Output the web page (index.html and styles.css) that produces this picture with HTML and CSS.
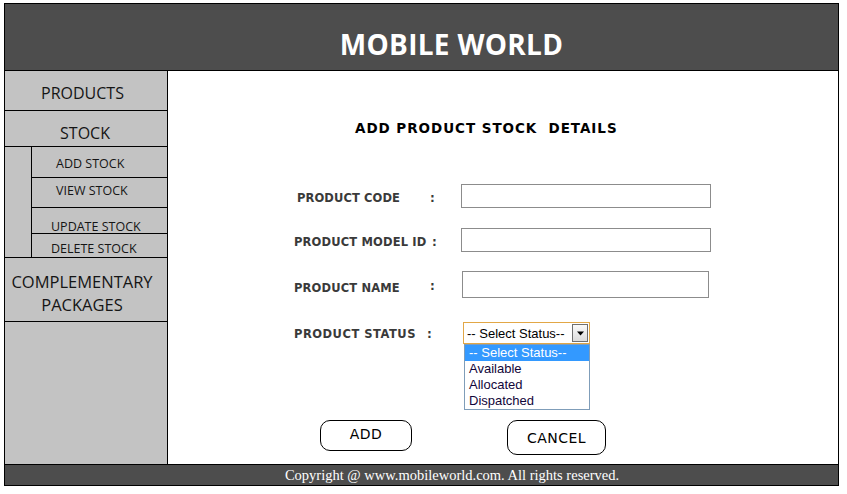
FILE: index.html
```html
<!DOCTYPE html>
<html>
<head>
<meta charset="utf-8">
<title>Mobile World</title>
<link rel="stylesheet" href="styles.css">
</head>
<body>
<div class="frame">
  <header class="header"><h1 class="brand">MOBILE WORLD</h1></header>
  <div class="body">
    <nav class="sidebar">
      <div class="nav-item nav-products">PRODUCTS</div>
      <div class="nav-item nav-stock">STOCK</div>
      <div class="subgroup">
        <div class="sub-spacer"></div>
        <div class="sub-list">
          <div class="sub-item sub-add">ADD STOCK</div>
          <div class="sub-item sub-view">VIEW STOCK</div>
          <div class="sub-item sub-update">UPDATE STOCK</div>
          <div class="sub-item sub-delete">DELETE STOCK</div>
        </div>
      </div>
      <div class="nav-item nav-comp">COMPLEMENTARY<br>PACKAGES</div>
    </nav>
    <main class="main">
      <h2 class="title">ADD PRODUCT STOCK&nbsp; DETAILS</h2>
      <div class="form">
        <label class="label label-code">PRODUCT CODE</label><span class="colon">:</span><div class="input"></div>
        <label class="label">PRODUCT MODEL ID</label><span class="colon colon-model">:</span><div class="input"></div>
        <label class="label label-name">PRODUCT NAME</label><span class="colon label-name">:</span><div class="input input-name"></div>
        <label class="label label-status">PRODUCT STATUS</label><span class="colon colon-status">:</span>
        <div class="select-wrap">
          <div class="select">
            <span class="select-text">-- Select Status--</span>
            <span class="select-btn"><svg width="9" height="5" viewBox="0 0 9 5"><path d="M1 0.5 L8 0.5 L4.5 4.5 Z" fill="#000"/></svg></span>
          </div>
          <ul class="dropdown">
            <li class="opt opt-active">-- Select Status--</li>
            <li class="opt">Available</li>
            <li class="opt">Allocated</li>
            <li class="opt">Dispatched</li>
          </ul>
        </div>
      </div>
      <div class="buttons">
        <button class="btn btn-add">ADD</button>
        <button class="btn btn-cancel">CANCEL</button>
      </div>
    </main>
  </div>
  <footer class="footer">Copyright @ www.mobileworld.com. All rights reserved.</footer>
</div>
</body>
</html>
```
FILE: styles.css
```css
* { box-sizing: border-box; }
html, body { margin: 0; padding: 0; background: #fff; }
.frame {
  margin: 3px 0 0 4px;
  width: 835px;
  border: 1px solid #000;
  display: flex;
  flex-direction: column;
}
.header {
  height: 67px;
  background: #4d4d4d;
  border-bottom: 1px solid #000;
  display: flex;
  align-items: center;
  justify-content: center;
  padding-left: 60px;
}
.brand {
  margin: 0;
  padding-top: 13px;
  color: #fff;
  font-family: "Open Sans", sans-serif;
  font-weight: 700;
  font-size: 28px;
  letter-spacing: 0.3px;
}
.body {
  display: flex;
  height: 393px;
}
.sidebar {
  width: 163px;
  background: #c3c3c3;
  border-right: 1px solid #000;
  font-family: "Open Sans", sans-serif;
  color: #151515;
  display: flex;
  flex-direction: column;
}
.nav-item {
  border-bottom: 1px solid #000;
  text-align: center;
  font-size: 16px;
  line-height: 20px;
}
.nav-products { height: 40px; padding-top: 12px; padding-right: 7px; }
.nav-stock { height: 36px; padding-top: 12px; padding-right: 2px; }
.subgroup {
  display: flex;
  height: 111px;
  border-bottom: 1px solid #000;
}
.sub-spacer {
  width: 27px;
  border-right: 1px solid #000;
}
.sub-list { flex: 1; display: flex; flex-direction: column; }
.sub-item {
  font-size: 12.5px;
  line-height: 16px;
  border-bottom: 1px solid #000;
  white-space: nowrap;
}
.sub-add { height: 31px; padding-top: 9px; padding-left: 24px; }
.sub-view { height: 31px; padding-top: 5px; padding-left: 24px; }
.sub-update { height: 26px; padding-top: 11px; padding-left: 19px; }
.sub-delete { height: 23px; padding-top: 7px; padding-left: 19px; border-bottom: none; }
.nav-comp {
  height: 64px;
  padding-top: 12px;
  padding-right: 8px;
  font-size: 16.5px;
  line-height: 23px;
}
.main {
  flex: 1;
  display: flex;
  flex-direction: column;
  position: relative;
}
.title {
  margin: 47px 0 0 0;
  padding-left: 187px;
  font-family: "DejaVu Sans", sans-serif;
  font-weight: 700;
  font-size: 13.5px;
  line-height: 20px;
  color: #000;
  letter-spacing: 0.95px;
}
.form {
  margin-top: 46px;
  margin-left: 126px;
  display: grid;
  grid-template-columns: 136px 31px 250px;
  grid-auto-rows: 24px;
  row-gap: 20px;
  align-items: center;
}
.label {
  font-family: "DejaVu Sans", sans-serif;
  font-weight: 700;
  font-size: 11.5px;
  color: #3a3a3a;
  letter-spacing: 0.15px;
  white-space: nowrap;
  padding-top: 3px;
}
.label-code { padding-left: 3px; letter-spacing: 0.1px; padding-top: 4px; }
.label-name { padding-top: 8px; }
.label-status { padding-top: 12px; letter-spacing: 0.5px; }
.colon {
  font-family: "DejaVu Sans", sans-serif;
  font-weight: 700;
  font-size: 12px;
  color: #3a3a3a;
  padding-top: 3px;
}
.colon-model { margin-left: 2px; }
.colon-status { margin-left: -3px; padding-top: 12px; }
.input {
  height: 24px;
  border: 1px solid #8c8c8c;
  background: #fff;
}
.input-name { height: 27px; width: 247px; margin-left: 1px; }
.select-wrap {
  position: relative;
  height: 24px;
  margin-top: 12px;
  margin-left: 2px;
}
.select {
  width: 127px;
  height: 22px;
  border: 1px solid #e2a746;
  display: flex;
  align-items: center;
  justify-content: space-between;
  padding: 0 1px 0 3px;
  font-family: "Liberation Sans", Arial, sans-serif;
  font-size: 13px;
  color: #000;
  background: #fff;
}
.select-btn {
  width: 16px;
  height: 18px;
  border: 1px solid #6f6f6f;
  background: linear-gradient(#fafafa, #dcdcdc);
  display: flex;
  align-items: center;
  justify-content: center;
}
.dropdown {
  position: absolute;
  top: 22px;
  left: 1px;
  width: 126px;
  margin: 0;
  padding: 0;
  list-style: none;
  border: 1px solid #7f9db9;
  background: #fff;
  font-family: "Liberation Sans", Arial, sans-serif;
  font-size: 13px;
  color: #12063a;
}
.opt { height: 16px; line-height: 16px; padding-left: 4px; }
.opt-active { background: #3399ff; color: #fff; }
.buttons {
  margin-top: 80px;
  margin-left: 152px;
  display: flex;
  align-items: flex-start;
  gap: 95px;
}
.btn {
  font-family: "DejaVu Sans", sans-serif;
  font-size: 14px;
  color: #000;
  background: #fff;
  border: 1px solid #000;
  border-radius: 10px;
  padding: 0;
  margin: 0;
  letter-spacing: 0.5px;
}
.btn-add { width: 92px; height: 31px; padding-bottom: 3px; }
.btn-cancel { width: 99px; height: 35px; padding-top: 1px; }
.footer {
  height: 21px;
  background: #4d4d4d;
  border-top: 1px solid #000;
  color: #fff;
  font-family: "Liberation Serif", "Times New Roman", serif;
  font-size: 14.5px;
  line-height: 21px;
  text-align: center;
  padding-left: 61px;
}
```
